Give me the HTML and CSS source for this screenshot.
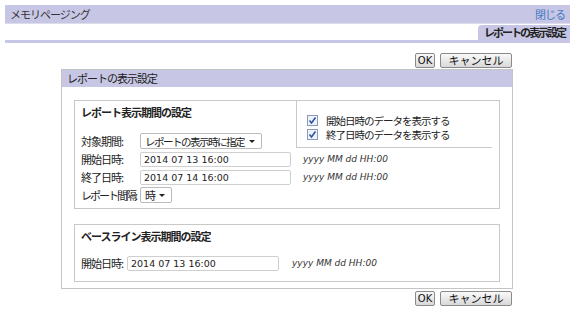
FILE: index.html
```html
<!DOCTYPE html>
<html lang="ja">
<head>
    <meta charset="UTF-8">
    <title>メモリページング</title>
    <link rel="stylesheet" href="styles.css">
</head>
<body>
    <div class="topbar">
        <span class="topbar-title">メモリページング</span>
        <a class="close-link" href="#">閉じる</a>
    </div>
    <div class="tab-row">
        <span class="tab">レポートの表示設定</span>
    </div>
    <div class="tab-line"></div>

    <div class="button-row">
        <button class="btn btn-ok">OK</button>
        <button class="btn btn-cancel">キャンセル</button>
    </div>

    <div class="dialog">
        <div class="dialog-header">レポートの表示設定</div>
        <div class="dialog-body">
            <div class="group">
                <div class="check-box">
                    <label class="check"><span class="tick"><svg width="9" height="9" viewBox="0 0 9 9"><path d="M1.5 4.5 L3.5 7 L7.5 1.5" fill="none" stroke="#2a50a0" stroke-width="1.5"/></svg></span>開始日時のデータを表示する</label>
                    <label class="check"><span class="tick"><svg width="9" height="9" viewBox="0 0 9 9"><path d="M1.5 4.5 L3.5 7 L7.5 1.5" fill="none" stroke="#2a50a0" stroke-width="1.5"/></svg></span>終了日時のデータを表示する</label>
                </div>
                <h3 class="group-title">レポート表示期間の設定</h3>
                <div class="form-row">
                    <span class="label">対象期間:</span>
                    <span class="select select-wide">レポートの表示時に指定<span class="arrow"></span></span>
                </div>
                <div class="form-row">
                    <span class="label">開始日時:</span>
                    <input class="date-input" type="text" value="2014 07 13 16:00">
                    <span class="hint">yyyy MM dd HH:00</span>
                </div>
                <div class="form-row">
                    <span class="label">終了日時:</span>
                    <input class="date-input" type="text" value="2014 07 14 16:00">
                    <span class="hint">yyyy MM dd HH:00</span>
                </div>
                <div class="form-row">
                    <span class="label label-tight">レポート間隔:</span>
                    <span class="select select-small">時<span class="arrow"></span></span>
                </div>
            </div>

            <div class="group group-base">
                <h3 class="group-title">ベースライン表示期間の設定</h3>
                <div class="form-row">
                    <span class="label label-short">開始日時:</span>
                    <input class="date-input date-base" type="text" value="2014 07 13 16:00">
                    <span class="hint hint-base">yyyy MM dd HH:00</span>
                </div>
            </div>
        </div>
    </div>

    <div class="button-row button-row-bottom">
        <button class="btn btn-ok">OK</button>
        <button class="btn btn-cancel">キャンセル</button>
    </div>
</body>
</html>
```

FILE: styles.css
```css
body {
    margin: 0;
    padding: 0;
    background: #fff;
    font-family: "Noto Sans CJK JP", "DejaVu Sans", sans-serif;
    font-size: 11px;
    letter-spacing: -1px;
    color: #222;
    white-space: nowrap;
}
.topbar {
    margin: 5px 15px 0 5px;
    height: 18px;
    background: #c7c7e5;
    display: flex;
    align-items: center;
    justify-content: space-between;
    padding: 0 5px;
    border-bottom: 1px solid #dcdcec;
}
.topbar-title {
    color: #333;
}
.close-link {
    color: #4578c4;
    text-decoration: none;
}
.tab-row {
    display: flex;
    justify-content: flex-end;
    margin: 1px 15px 0 5px;
}
.tab {
    background: #c7c7e5;
    font-weight: bold;
    letter-spacing: -2px;
    padding: 0 5px 0 6px;
    height: 15px;
    line-height: 15px;
    border-radius: 4px 0 0 0;
    color: #222;
}
.tab-line {
    margin: 0 15px 0 5px;
    height: 3px;
    background: #c7c7e5;
}
.button-row {
    display: flex;
    justify-content: flex-end;
    gap: 5px;
    margin: 10px 73px 0 0;
}
.button-row-bottom {
    margin-top: 2px;
}
.btn {
    font-family: inherit;
    font-size: 11px;
    letter-spacing: 0;
    height: 15px;
    line-height: 13px;
    padding: 0;
    border: 1px solid #8a8a8a;
    border-radius: 2px;
    background: linear-gradient(#fafafa, #d8d8d8);
    color: #111;
}
.btn-ok {
    width: 20px;
    font-family: "DejaVu Sans", sans-serif;
    font-size: 10px;
}
.btn-cancel {
    width: 72px;
}
.dialog {
    margin: 1px 0 0 61px;
    width: 450px;
    border: 1px solid #c4c4c4;
}
.dialog-header {
    background: #c7c7e5;
    height: 17px;
    line-height: 17px;
    padding-left: 5px;
    color: #222;
}
.dialog-body {
    padding: 13px 12px 6px 12px;
}
.group {
    border: 1px solid #c8c8c8;
    padding: 0 6px 4px 6px;
}
.group-title {
    margin: 0 0 9px 0;
    line-height: 22px;
    font-size: 11px;
    font-weight: bold;
}
.form-row {
    display: flex;
    align-items: center;
    height: 18px;
}
.form-row > * {
    flex-shrink: 0;
}
.label {
    width: 59px;
}
.label-tight {
    letter-spacing: -2px;
}
.label-short {
    width: 46px;
}
.select {
    display: inline-flex;
    align-items: center;
    border: 1px solid #bbb;
    border-radius: 2px;
    padding: 0 6px 0 4px;
    background: #fff;
    box-sizing: border-box;
    height: 16px;
}
.select-wide {
    width: 122px;
    font-size: 10.5px;
    letter-spacing: -1.5px;
}
.select-small {
    width: 32px;
}
.arrow {
    margin-left: auto;
    border-left: 3px solid transparent;
    border-right: 3px solid transparent;
    border-top: 3px solid #222;
}
.date-input {
    width: 151px;
    height: 15px;
    box-sizing: border-box;
    padding: 0 3px;
    border: 1px solid #cfcfcf;
    border-radius: 2px;
    font-family: "DejaVu Sans", sans-serif;
    font-size: 9.5px;
    letter-spacing: 0;
    color: #222;
}
.date-base {
    width: 152px;
}
.hint {
    margin-left: 12px;
    font-family: "DejaVu Sans", sans-serif;
    font-style: italic;
    font-size: 9px;
    letter-spacing: 0;
    color: #333;
}
.hint-base {
    margin-left: 13px;
}
.check-box {
    float: right;
    width: 196px;
    height: 47px;
    margin-right: 1px;
    border: 1px solid #c8c8c8;
    border-right: none;
    border-top: none;
    padding: 14px 0 0 10px;
    box-sizing: border-box;
    display: flex;
    flex-direction: column;
    gap: 3px;
    font-size: 10.5px;
    letter-spacing: -1px;
}
.check {
    display: flex;
    align-items: center;
    height: 11px;
    line-height: 11px;
}
.tick {
    width: 9px;
    height: 9px;
    border: 1px solid #8a9ab8;
    background: #eef2fa;
    margin-right: 8px;
    display: inline-flex;
}
.group-base {
    margin-top: 15px;
    padding-bottom: 9px;
}
.group-base .group-title {
    margin-bottom: 7px;
}
```
